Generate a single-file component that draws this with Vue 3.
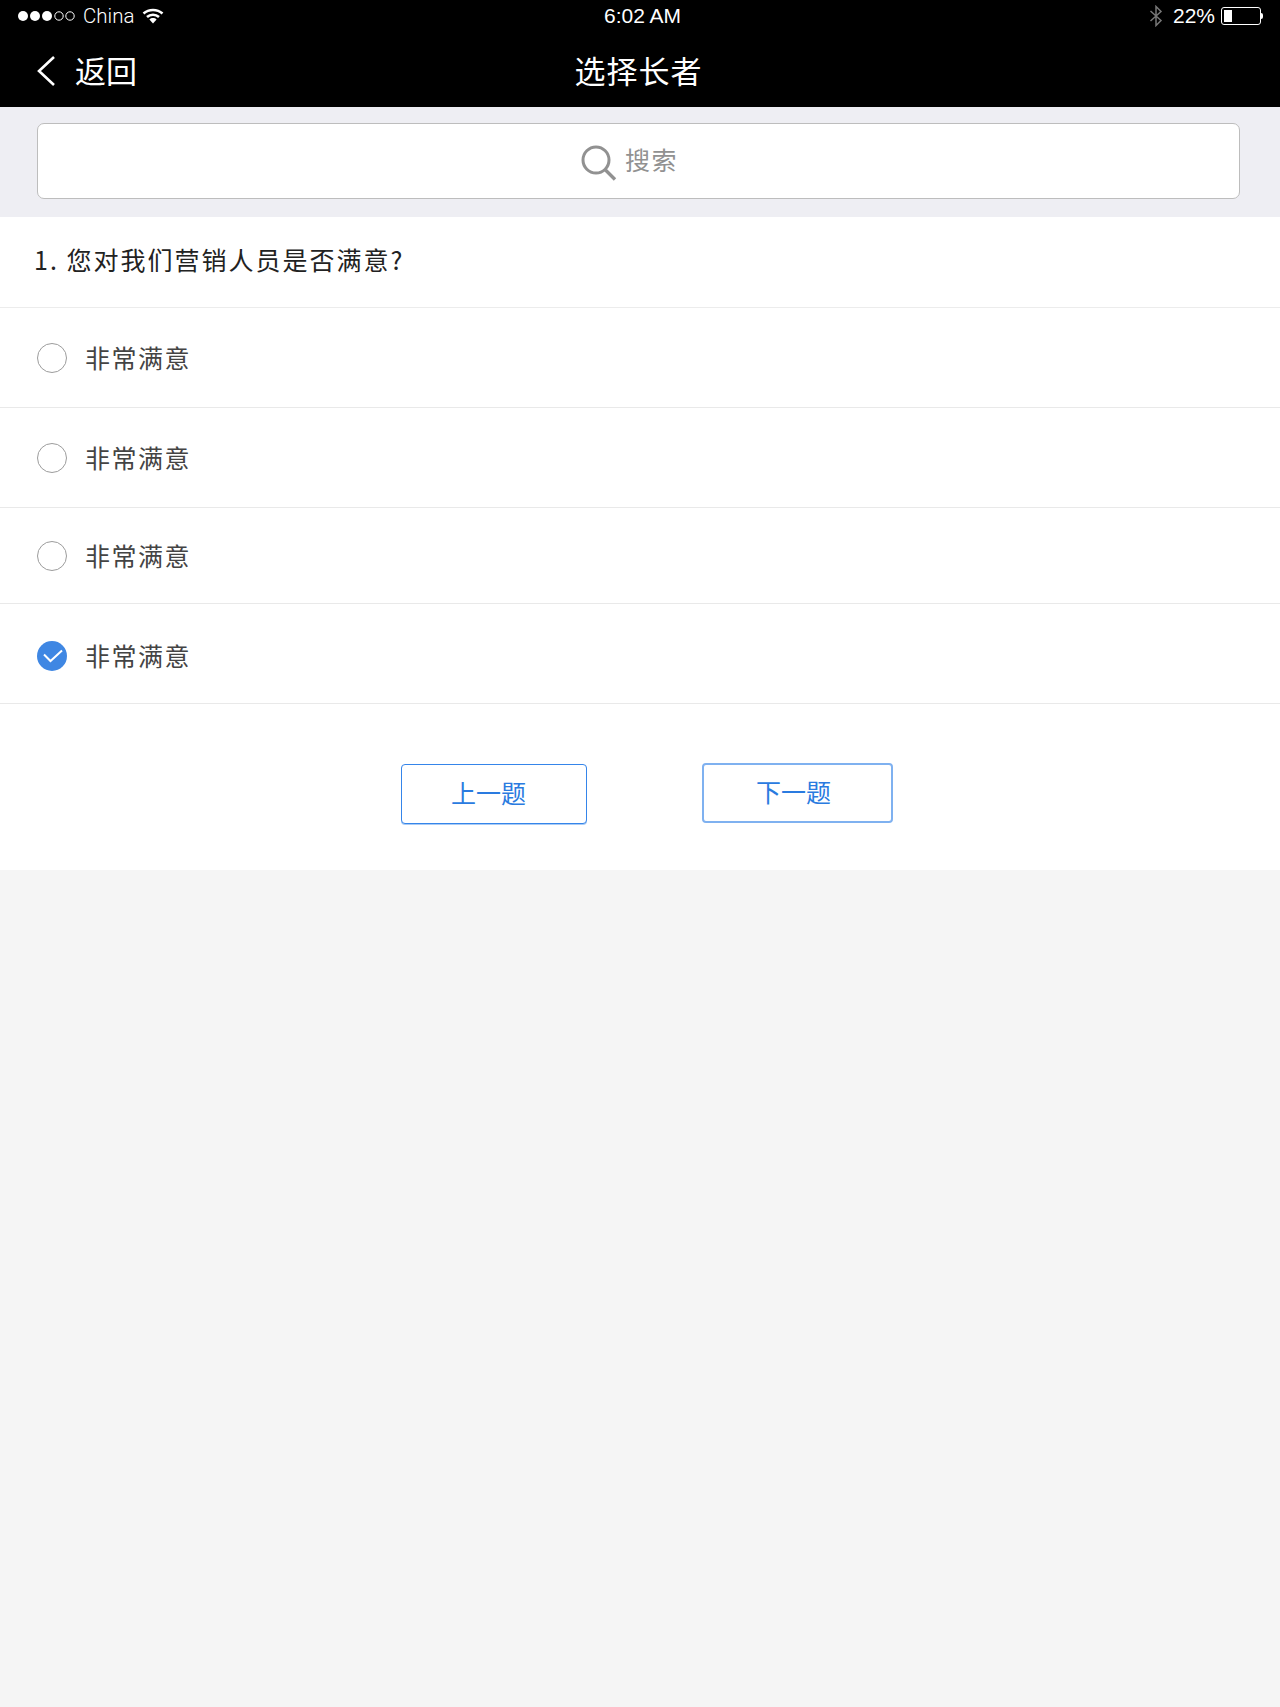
<script setup>
const options = [
  { id: 1, height: 100, checked: false },
  { id: 2, height: 100, checked: false },
  { id: 3, height: 96, checked: false },
  { id: 4, height: 100, checked: true },
]
</script>

<template>
  <div class="page">
    <header class="header">
      <div class="status">
        <div class="status-left">
          <svg class="dots" width="58" height="12" viewBox="0 0 58 12">
            <circle cx="6" cy="6" r="5" fill="#fff" />
            <circle cx="18" cy="6" r="5" fill="#fff" />
            <circle cx="30" cy="6" r="5" fill="#fff" />
            <circle cx="42" cy="6" r="4.2" fill="none" stroke="#fff" stroke-width="1" />
            <circle cx="53" cy="6" r="4.2" fill="none" stroke="#fff" stroke-width="1" />
          </svg>
          <span class="carrier">China</span>
          <svg class="wifi" width="22" height="16" viewBox="0 0 22 16">
            <path d="M1.500 5.500C6.800.8 15.200.8 20.500 5.500" fill="none" stroke="#fff" stroke-width="2.600" />
            <path d="M5 9c3.400-3 8.600-3 12 0" fill="none" stroke="#fff" stroke-width="2.600" />
            <path d="M7.400 11.400c2-1.800 5.200-1.800 7.200 0L11 15.600z" fill="#fff" />
          </svg>
        </div>
        <span class="time">6:02 AM</span>
        <div class="status-right">
          <svg class="bt" width="14" height="22" viewBox="0 0 14 22">
            <path d="M1.500 6l10.500 9.500L7 20.500V1.500L12 6.500 1.500 16" fill="none" stroke="#777" stroke-width="1.500" />
          </svg>
          <span class="battery-text">22%</span>
          <div class="battery">
            <div class="battery-body"><div class="battery-fill"></div></div>
            <div class="battery-tip"></div>
          </div>
        </div>
      </div>
      <div class="nav">
        <div class="back">
          <svg class="chevron" width="20" height="32" viewBox="0 0 20 32">
            <path d="M18 2 3 16l15 14" fill="none" stroke="#fff" stroke-width="2.600" />
          </svg>
          <span class="back-text">返回</span>
        </div>
        <div class="title">选择长者</div>
      </div>
    </header>

    <div class="search-wrap">
      <div class="search">
        <svg class="search-icon" width="36" height="36" viewBox="0 0 36 36">
          <circle cx="15" cy="15" r="13" fill="none" stroke="#919191" stroke-width="3" />
          <path d="M24.500 25 34 34.500" fill="none" stroke="#919191" stroke-width="3.400" />
        </svg>
        <span class="search-text">搜索</span>
      </div>
    </div>

    <section class="card">
      <div class="question">1. 您对我们营销人员是否满意?</div>
      <div
        v-for="o in options"
        :key="o.id"
        class="option"
        :class="{ 'option-checked': o.checked }"
        :style="{ height: o.height + 'px' }"
      >
        <span v-if="!o.checked" class="radio"></span>
        <svg v-else class="radio-on" width="30" height="30" viewBox="0 0 30 30">
          <circle cx="15" cy="15" r="15" fill="#3f87e3" />
          <path d="M7 13.500l6.500 6.500L25 9.500" fill="none" stroke="#fff" stroke-width="2" />
        </svg>
        <span class="option-text">非常满意</span>
      </div>
      <div class="actions">
        <button class="btn btn-prev">上一题</button>
        <button class="btn btn-next">下一题</button>
      </div>
    </section>
  </div>
</template>

<style>
html, body { margin: 0; background: #f5f5f5; }
</style>

<style scoped>
.page {
  width: 1280px;
  height: 1707px;
  background: #f5f5f5;
  font-family: "Noto Sans CJK SC", "Liberation Sans", sans-serif;
  overflow: hidden;
}
.header {
  height: 107px;
  background: #000;
  color: #fff;
  box-sizing: border-box;
}
.status {
  height: 32px;
  position: relative;
  display: flex;
  justify-content: space-between;
  align-items: center;
  font-family: "Liberation Sans", sans-serif;
  font-size: 21px;
}
.status-left {
  display: flex;
  align-items: center;
  padding-left: 17px;
}
.carrier {
  margin-left: 8px;
  font-family: Roboto, "Liberation Sans", sans-serif;
  font-weight: 300;
  font-size: 20.500px;
}
.wifi { margin-left: 8px; }
.time {
  position: absolute;
  left: 604px;
  top: 3px;
  line-height: 26px;
}
.status-right {
  display: flex;
  align-items: center;
  padding-right: 17px;
}
.bt { margin-right: 10px; }
.battery-text { margin-right: 6px; }
.battery { display: flex; align-items: center; }
.battery-body {
  width: 34px;
  border: 1px solid #fff;
  border-radius: 3px;
  padding: 2px;
  box-sizing: content-box;
  height: 12px;
}
.battery-fill { width: 8px; height: 12px; background: #fff; }
.battery-tip {
  width: 2px;
  height: 6px;
  background: #fff;
  border-radius: 0 2px 2px 0;
}
.nav {
  height: 75px;
  position: relative;
  display: flex;
  align-items: center;
  box-sizing: border-box;
  padding-left: 36px;
}
.back { display: flex; align-items: center; }
.chevron { margin-top: 2px; }
.back-text {
  margin-left: 19px;
  font-size: 31px;
  line-height: 40px;
}
.title {
  position: absolute;
  left: 0;
  right: 0;
  padding-right: 3px;
  text-align: center;
  font-size: 31px;
  letter-spacing: 1px;
  line-height: 40px;
}
.search-wrap {
  height: 110px;
  background: #eeeef3;
  box-sizing: border-box;
  padding: 16px 40px 0 37px;
}
.search {
  height: 76px;
  background: #fff;
  border: 1px solid #bdbdbd;
  border-radius: 7px;
  box-sizing: border-box;
  display: flex;
  align-items: center;
  justify-content: center;
  padding-right: 18px;
}
.search-icon { margin-right: 8px; margin-top: 3px; }
.search-text {
  font-size: 25px;
  letter-spacing: 1.500px;
  color: #919191;
  margin-top: -4px;
}
.card { background: #fff; height: 653px; }
.question {
  height: 91px;
  box-sizing: border-box;
  border-bottom: 1px solid #ececec;
  padding: 0 0 7px 34px;
  display: flex;
  align-items: center;
  font-size: 25px;
  letter-spacing: 2px;
  color: #222;
}
.option {
  box-sizing: border-box;
  border-bottom: 1px solid #e9e9e9;
  display: flex;
  align-items: center;
  padding-left: 37px;
}
.option-checked { padding-top: 4px; }
.radio {
  width: 30px;
  height: 30px;
  box-sizing: border-box;
  border: 1px solid #9c9c9c;
  border-radius: 50%;
}
.option-text {
  margin: -2px 0 0 18px;
  font-size: 25px;
  letter-spacing: 1.500px;
  color: #444;
}
.actions {
  display: flex;
  align-items: flex-start;
  padding: 59px 0 0 401px;
}
.btn {
  height: 60px;
  background: #fff;
  border-radius: 4px;
  box-sizing: border-box;
  padding: 0 0 4px;
  font-family: inherit;
  font-size: 25px;
  color: #2a7be0;
}
.btn-prev {
  width: 186px;
  margin-top: 1px;
  padding-right: 11px;
  border: 1px solid #3585ea;
  box-shadow: 0 1px 0 #a9cbf5;
}
.btn-next {
  width: 191px;
  margin-left: 115px;
  border: 2px solid #7fb1f0;
  padding-right: 8px;
}
</style>
